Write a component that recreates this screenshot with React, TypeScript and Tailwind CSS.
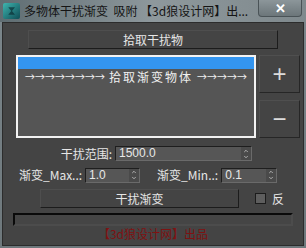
import { ChevronUp, ChevronDown } from 'lucide-react';

const font = { fontFamily: '"Noto Sans CJK SC", "Noto Sans", sans-serif' };

function Spinner({ value, width }: { value: string; width: string }) {
  return (
    <div className={`flex h-[15px] ${width} border-t border-l border-[#1e1e1e] border-b border-r border-b-[#6a6a6a] border-r-[#6a6a6a]`}>
      <div className="flex-1 bg-[#565656] text-[12px] leading-[13px] text-[#e8e8e8] pl-[3px]" style={{ fontFamily: '"Liberation Sans", sans-serif' }}>
        {value}
      </div>
      <div className="w-[10px] bg-[#4a4a4a] flex flex-col items-center justify-center text-[#cfcfcf]">
        <ChevronUp className="w-[8px] h-[6px]" strokeWidth={3} />
        <ChevronDown className="w-[8px] h-[6px]" strokeWidth={3} />
      </div>
    </div>
  );
}

export default function App() {
  return (
    <div className="w-[306px] h-[248px] flex flex-col bg-gradient-to-b from-[#7c878c] to-[#6e787c] overflow-hidden" style={font}>
      {/* title bar */}
      <div className="h-[22px] shrink-0 flex items-start relative bg-gradient-to-r from-[#5f6d72] via-[#8e989c] to-[#7f898d]">
        <div className="mt-[3px] ml-[3px] w-[17px] h-[16px] rounded-[2px] bg-gradient-to-br from-[#3fb6b0] to-[#0e4d55] flex items-center justify-center">
          <svg viewBox="0 0 16 16" className="w-[12px] h-[12px]">
            <path d="M3 3 L12 3 L8 8 L12 13 L3 13 L7 8 Z" fill="#0b2f35" opacity="0.7" />
          </svg>
        </div>
        <span className="ml-[4px] mt-[2px] text-[12px] leading-[18px] text-[#141414] whitespace-nowrap">
          多物体干扰渐变&nbsp;&nbsp;吸附&nbsp;【3d狼设计网】出...
        </span>
        <div className="absolute right-[4px] top-0 w-[44px] h-[17px] rounded-b-[4px] border border-t-0 border-[#4a5357] bg-gradient-to-b from-[#8c969a] to-[#6c767a] flex items-center justify-center">
          <span className="text-white text-[13px] font-bold leading-none" style={{ fontFamily: '"Liberation Sans", sans-serif' }}>✕</span>
        </div>
      </div>

      {/* body */}
      <div className="flex-1 mx-[2px] mb-[2px] bg-[#444444] border border-[#2c2c2c] flex flex-col text-[#e6e6e6] overflow-hidden">
        <div className="mt-[7px] ml-[25px] w-[250px] h-[19px] shrink-0 border border-t-[#4e4e4e] border-l-[#4e4e4e] border-b-[#1c1c1c] border-r-[#1c1c1c] flex items-center justify-center text-[12px] leading-none">
          拾取干扰物
        </div>

        <div className="mt-[6px] flex shrink-0">
          <div className="ml-[13px] w-[240px] h-[83px] border-2 border-[#f2f2f2] bg-[#555555] flex flex-col overflow-hidden">
            <div className="h-[12px] shrink-0 bg-[#3395f0]" />
            <div className="h-[15px] shrink-0 flex items-center justify-center leading-[15px] text-[#f0f0f0] whitespace-nowrap">
              <span className="text-[10px]">→→→→→→→→</span>
              <span className="mx-[4px] text-[12px] tracking-[2px]">拾取渐变物体</span>
              <span className="text-[10px]">→→→→→</span>
            </div>
          </div>
          <div className="ml-[3px] flex flex-col gap-[7px]">
            <div className="w-[41px] h-[38px] border border-t-[#4f4f4f] border-l-[#4f4f4f] border-b-[#262626] border-r-[#262626] flex items-center justify-center text-[24px] leading-none text-[#dcdcdc]" style={{ fontFamily: '"Liberation Sans", sans-serif' }}>
              +
            </div>
            <div className="w-[41px] h-[38px] border border-t-[#4f4f4f] border-l-[#4f4f4f] border-b-[#262626] border-r-[#262626] flex items-center justify-center text-[24px] leading-none text-[#dcdcdc]" style={{ fontFamily: '"Liberation Sans", sans-serif' }}>
              −
            </div>
          </div>
        </div>

        <div className="mt-[8px] flex items-center h-[15px] shrink-0">
          <span className="ml-[53px] w-[56px] text-right text-[12px] leading-none whitespace-nowrap">干扰范围:</span>
          <div className="ml-[3px]">
            <Spinner value="1500.0" width="w-[137px]" />
          </div>
        </div>

        <div className="mt-[6px] flex items-center h-[16px] shrink-0">
          <span className="ml-[16px] text-[12px] leading-none whitespace-nowrap">渐变_Max..:</span>
          <div className="ml-[3px]">
            <Spinner value="1.0" width="w-[55px]" />
          </div>
          <span className="ml-[17px] text-[12px] leading-none whitespace-nowrap">渐变_Min..:</span>
          <div className="ml-[3px]">
            <Spinner value="0.1" width="w-[56px]" />
          </div>
        </div>

        <div className="mt-[6px] flex items-center shrink-0">
          <div className="ml-[37px] w-[199px] h-[19px] border border-t-[#4e4e4e] border-l-[#4e4e4e] border-b-[#1c1c1c] border-r-[#1c1c1c] flex items-center justify-center text-[12px] leading-none">
            干扰渐变
          </div>
          <div className="ml-[16px] w-[11px] h-[11px] border border-[#1c1c1c] bg-[#5e5e5e]" />
          <span className="ml-[6px] text-[12px] leading-none">反</span>
        </div>

        <div className="mt-[5px] ml-[10px] w-[280px] h-[13px] shrink-0 border-2 border-t-[#0a0a0a] border-l-[#0a0a0a] border-b-[#4c4c4c] border-r-[#4c4c4c] bg-[#454545]" />

        <div className="mt-[1px] flex justify-center text-[12px] leading-[14px] text-[#7e1212] shrink-0">
          【3d狼设计网】出品
        </div>
      </div>
    </div>
  );
}
